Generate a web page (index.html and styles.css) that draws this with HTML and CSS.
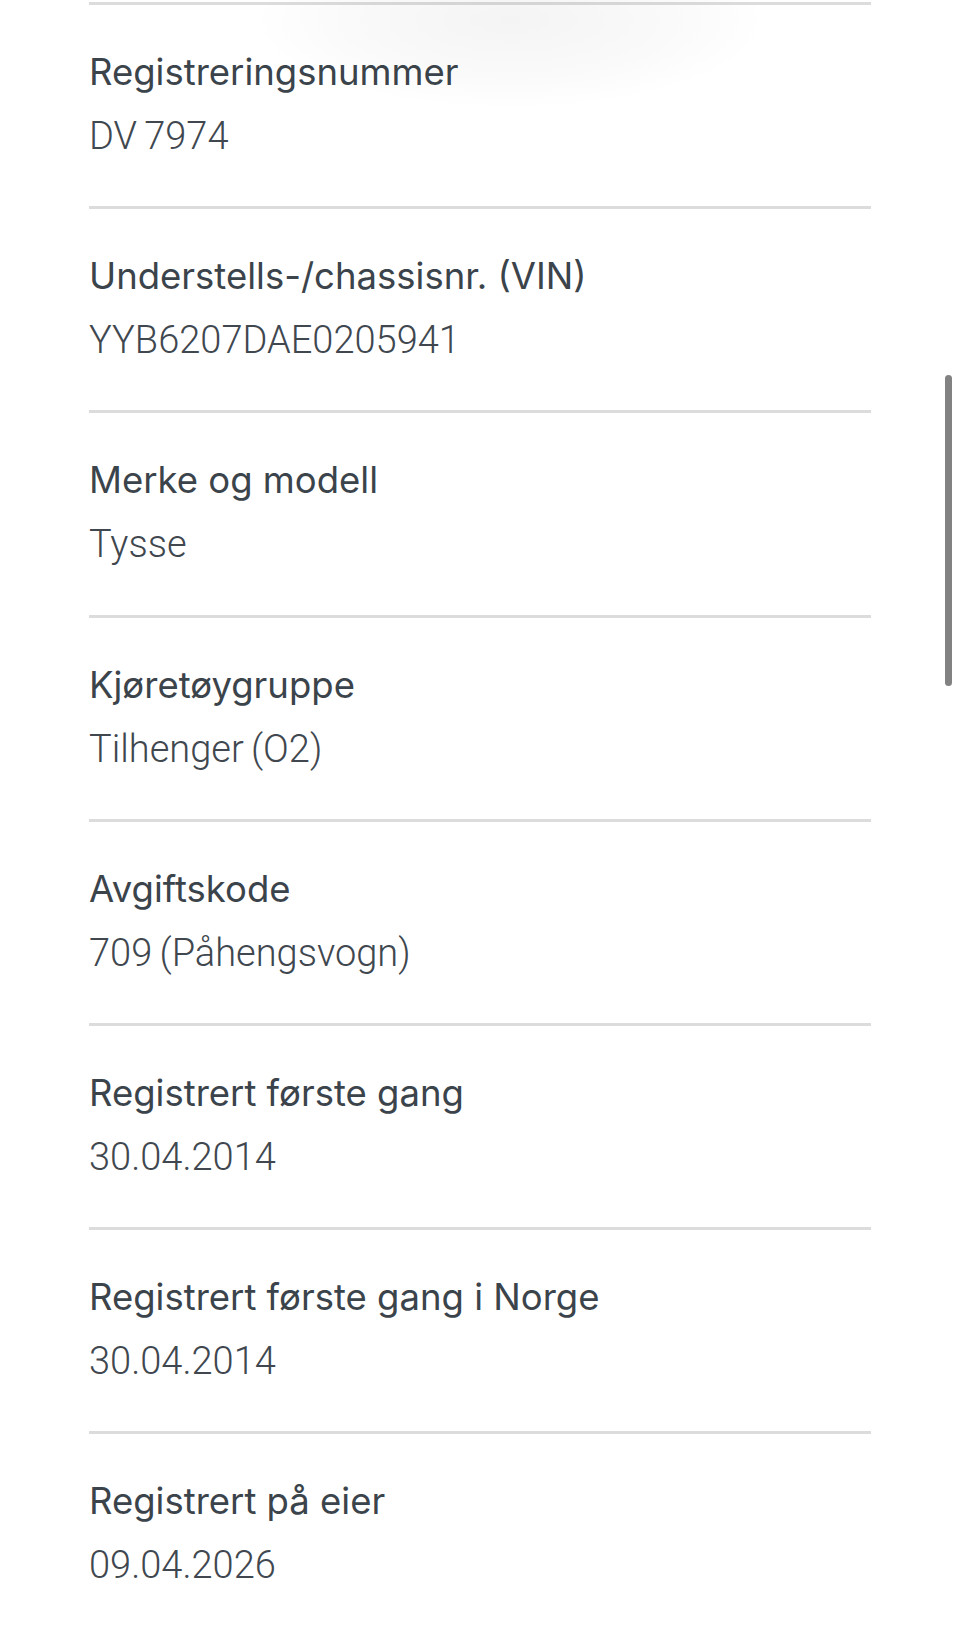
FILE: index.html
```html
<!DOCTYPE html>
<html lang="no">
<head>
<meta charset="utf-8">
<title>Kjøretøyopplysninger</title>
<link rel="stylesheet" href="styles.css">
</head>
<body>
<div class="page">
  <div class="top-shadow"></div>
  <dl class="details">
    <div class="row"><dt class="label">Registreringsnummer</dt><dd class="value">DV 7974</dd></div>
    <div class="row"><dt class="label">Understells-/chassisnr. (VIN)</dt><dd class="value">YYB6207DAE0205941</dd></div>
    <div class="row"><dt class="label">Merke og modell</dt><dd class="value">Tysse</dd></div>
    <div class="row"><dt class="label">Kjøretøygruppe</dt><dd class="value">Tilhenger (O2)</dd></div>
    <div class="row"><dt class="label">Avgiftskode</dt><dd class="value">709 (Påhengsvogn)</dd></div>
    <div class="row"><dt class="label">Registrert første gang</dt><dd class="value">30.04.2014</dd></div>
    <div class="row"><dt class="label">Registrert første gang i Norge</dt><dd class="value">30.04.2014</dd></div>
    <div class="row"><dt class="label">Registrert på eier</dt><dd class="value">09.04.2026</dd></div>
  </dl>
  <div class="scrollbar"></div>
</div>
</body>
</html>
```

FILE: styles.css
```css
html, body {
  margin: 0;
  padding: 0;
  background: #ffffff;
}

.page {
  position: relative;
  width: 960px;
  height: 1626px;
  overflow: hidden;
  color: #3d454d;
}

.top-shadow {
  position: absolute;
  left: 250px;
  top: -70px;
  width: 520px;
  height: 180px;
  background: radial-gradient(ellipse at center, rgba(0,0,0,0.045) 0%, rgba(0,0,0,0.02) 45%, rgba(0,0,0,0) 70%);
  pointer-events: none;
}

.details {
  margin: 2px 0 0 89px;
  width: 782px;
  padding: 0;
}

.row {
  box-sizing: border-box;
  height: 204.2px;
  border-top: 3px solid #dcdcdc;
  padding-top: 35px;
}

.label, .value {
  margin: 0;
  white-space: nowrap;
}

.label {
  font-family: Inter, Lato, "Liberation Sans", sans-serif;
  font-size: 36.5px;
  line-height: 64px;
  font-weight: 400;
  color: #3b434b;
}

.value {
  font-family: Roboto, Lato, "Liberation Sans", sans-serif;
  font-size: 38px;
  line-height: 64px;
  font-weight: 300;
  word-spacing: -2px;
  color: #40474f;
}

.scrollbar {
  position: absolute;
  left: 945px;
  top: 375px;
  width: 7px;
  height: 311px;
  border-radius: 4px;
  background: #828282;
}
```
